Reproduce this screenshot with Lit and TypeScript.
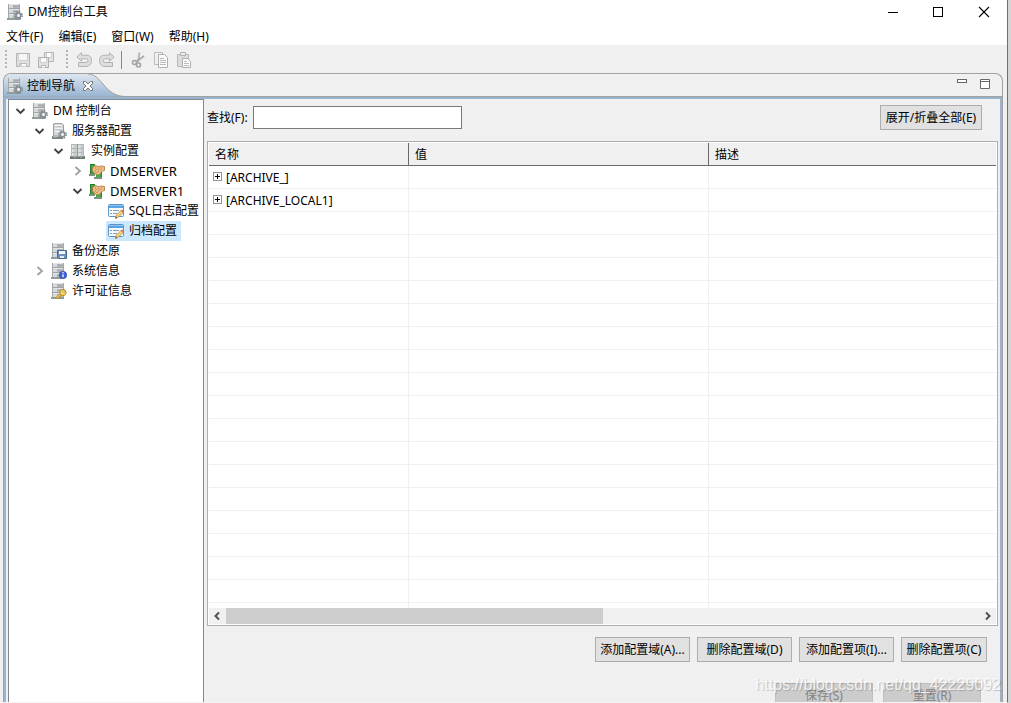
import { LitElement, html, css, svg, nothing } from "lit";
import { customElement, property } from "lit/decorators.js";

const gear = svg`
  <circle cx="11.5" cy="11.5" r="3.6" fill="none" stroke="#7d848b" stroke-width="1.6" stroke-dasharray="1.5 1.33"/>
  <circle cx="11.5" cy="11.5" r="2.4" fill="#d4d8dc" stroke="#858c93" stroke-width="1.4"/>
  <circle cx="11.5" cy="11.5" r=".9" fill="#fff"/>`;

const rack = svg`
  <path d="M1 0h12v14H1z" fill="#b4b8bb"/>
  <path d="M2 0h4v14H2z" fill="#d6d9db"/>
  <path d="M1.5 0v14M12.5 0v14" stroke="#a4a8ab"/>
  <path d="M2 .5h10M2 5.5h10M2 10.5h10" stroke="#e2e5e6"/>
  <path d="M1 4.5h12M1 9.5h12" stroke="#a0a4a7"/>
  <path d="M6.500 2.500h5M6.500 7.500h5M6.500 12.500h5" stroke="#a5a9ac"/>
  <rect x="0" y="14" width="13" height="2" fill="#949a9d"/>
  <path d="M3 14.5h2" stroke="#7cae7e"/>`;

const icons: Record<string, unknown> = {
  console: svg`${rack}${gear}`,
  server: svg`
    <path d="M3 .5h8l1.500 1.500v11h-10V1z" fill="#d6d8da" stroke="#9b9fa2"/>
    <path d="M4 2.500h7M4 5.500h7M4 8.500h4" stroke="#f6f7f7"/>
    <path d="M4 3.500h7M4 6.500h7" stroke="#c0c4c6"/>
    <rect x="1" y="13" width="11" height="3" fill="#7f8487"/>
    <path d="M2 13.500h8" stroke="#b6babc"/>
    <path d="M3 14.5h2" stroke="#7cae7e"/>${gear}`,
  instance: svg`
    <path d="M1 1h13v12H1z" fill="#c9cccd"/>
    <path d="M2.500 1v12M9.500 1v12" stroke="#e0e2e3" stroke-width="2"/>
    <path d="M1.500 5.500h5M8.500 5.500h5M1.500 9.500h5M8.500 9.500h5" stroke="#b0b4b6"/>
    <path d="M1.500 1v12M13.500 1v12M1 1.500h13" stroke="#b4b8ba"/>
    <path d="M7.500 1v12" stroke="#94999b"/>
    <rect x="0" y="13" width="15" height="3" fill="#70757a"/>
    <path d="M1 13.500h13" stroke="#989da0"/>
    <path d="M4 14.500h2M10 14.500h2" stroke="#6cbf6e"/>`,
  database: svg`
    <path d="M1 1h5v10H1z" fill="#3aa53f"/>
    <path d="M7 7h6v8H7z" fill="#3fae45"/>
    <path d="M1.500 1v10M12.500 8v7M1 1.500h5" stroke="#2a7f30"/>
    <path d="M0 11h6v2H0zM5 14h8v2H5z" fill="#7f9183"/>
    <path d="M3.500 4.500L6 2.500l3.500 1 3-.5 3 .5v4l-2 .5-3 3.500-2.500.5-3-2-1.500-2z" fill="#eabd8b" stroke="#b07337" stroke-width=".8"/>
    <path d="M6 5h1M9 5h1M12 5h1M7.500 6.500h1M10.500 6.500h1M6 8h1M9 8h1M7.500 9.500h1" stroke="#b8783e"/>`,
  config: svg`
    <rect x=".5" y="1.500" width="15" height="12" rx="1" fill="#f5fafe" stroke="#5b93c8"/>
    <rect x="1" y="2" width="14" height="3" fill="#58a4e6"/>
    <path d="M1 2.500h14" stroke="#8cc3f2"/>
    <path d="M2 7.500h2M5 7.500h6M2 10.500h2M5 10.500h4" stroke="#8b9aa8"/>
    <path d="M7.500 15.500l1-3.500 5-5 2 2-5 5z" fill="#f7d774" stroke="#a37a35" stroke-width=".7"/>
    <path d="M12.800 7.700L14 6.500l1.800 1.800-1.200 1.200z" fill="#dd6a60"/>
    <path d="M7.500 15.500l.4-1.500 1.100 1.100z" fill="#40352a"/>`,
  backup: svg`${rack}
    <path d="M6.500 7.500h9v8h-8l-1-1z" fill="#6c93bd" stroke="#426a96"/>
    <rect x="8" y="8" width="6" height="3" fill="#f4f7fa"/>
    <rect x="9" y="13" width="4" height="2" fill="#e4ebf1"/>`,
  info: svg`${rack}
    <circle cx="12" cy="12" r="3.800" fill="#3c60cf" stroke="#2746a3" stroke-width=".5"/>
    <path d="M12 9v1.300M12 11.200v3" stroke="#fff" stroke-width="1.300"/>`,
  license: svg`${rack}
    <path d="M9.500 10l-4.500 4.500v1.200h2.500v-1.200H9v-1.300l2-1.500z" fill="#f2c940" stroke="#a67f22" stroke-width=".8"/>
    <circle cx="12" cy="9.500" r="3.100" fill="#f9dc6a" stroke="#b58b22"/>
    <circle cx="12.800" cy="8.700" r="1" fill="#fffbe8" stroke="#8f6a14" stroke-width=".5"/>`,
  save: svg`
    <path d="M1.500 1.500h13v13h-13z" fill="#e0e0e0" stroke="#b4b4b4"/>
    <path d="M3.500 2v6.500h9V2" fill="#f6f6f6" stroke="#cecece"/>
    <path d="M4.500 14.500v-3h7v3" fill="#fafafa" stroke="#bababa"/>
    <path d="M6 12v2" stroke="#aaa"/>`,
  saveall: svg`
    <path d="M6.500 .5h9v9h-9z" fill="#e4e4e4" stroke="#b4b4b4"/>
    <path d="M8.500 1v4.500h5V1" fill="#fafafa" stroke="#cecece"/>
    <path d="M.5 5.500h10v10H.5z" fill="#e0e0e0" stroke="#b0b0b0"/>
    <path d="M2.500 6v4.500h6V6" fill="#fafafa" stroke="#cecece"/>
    <path d="M3.500 15.500v-2h4v2" fill="#fff" stroke="#b4b4b4"/>`,
  undo: svg`<path d="M5.500 .8L.8 5l4.700 4.200V6.800H10q2 0 2 1.800T10 10.500H2.500v4H10q5.500-.5 5.500-6T10 3.200H5.500z" fill="#dedede" stroke="#b2b2b2"/>`,
  redo: svg`<path d="M10.500 .8L15.200 5l-4.700 4.200V6.800H6q-2 0-2 1.800t2 1.900h7.500v4H6Q.5 14 .5 8.500T6 3.200h4.500z" fill="#dedede" stroke="#b2b2b2"/>`,
  cut: svg`
    <path d="M9.500 .5L8 10" stroke="#b4b4b4" stroke-width="1.800" fill="none"/>
    <path d="M14 4L6.500 9.500" stroke="#aaa" stroke-width="1.800" fill="none"/>
    <circle cx="4.500" cy="10.500" r="2" fill="none" stroke="#a2a2a2" stroke-width="1.600"/>
    <circle cx="8.500" cy="13" r="2" fill="none" stroke="#a2a2a2" stroke-width="1.600"/>`,
  copy: svg`
    <path d="M1.500 .5h8v12h-8z" fill="#f0f0f0" stroke="#bcbcbc"/>
    <path d="M5.500 2.500h6l3 3v10h-9z" fill="#fafafa" stroke="#b0b0b0"/>
    <path d="M7 6.500h4M7 8.500h6M7 10.500h6M7 12.500h6" stroke="#bbb"/>`,
  paste: svg`
    <path d="M1.500 2.500h11v12h-11z" fill="#dcdcdc" stroke="#b8b8b8"/>
    <path d="M4.500 .5h5v3h-5z" fill="#eee" stroke="#b0b0b0"/>
    <path d="M6.500 6.500h5l3 3v6h-8z" fill="#fafafa" stroke="#aeaeae"/>
    <path d="M8 9.500h3M8 11.500h5M8 13.500h5" stroke="#bbb"/>`,
  open: svg`<path d="M3.500 6L7.500 10l4-4" fill="none" stroke="#404040" stroke-width="1.800"/>`,
  closed: svg`<path d="M5.500 4L10 8l-4.500 4" fill="none" stroke="#a0a0a0" stroke-width="1.800"/>`,
  left: svg`<path d="M10 4.500L6.500 8l3.500 3.500" fill="none" stroke="#505050" stroke-width="2"/>`,
  right: svg`<path d="M7 4.500L10.500 8 7 11.500" fill="none" stroke="#505050" stroke-width="2"/>`,
  minimize: svg`<path d="M4 8.500h10" stroke="#000"/>`,
  maximize: svg`<rect x="3.500" y="3.500" width="9" height="9" fill="none" stroke="#000"/>`,
  close: svg`<path d="M3 3l10 10M13 3L3 13" stroke="#000" stroke-width="1.100"/>`,
  viewmin: svg`<rect x="3.500" y="3.500" width="9" height="3" fill="#fff" stroke="#666"/>`,
  viewmax: svg`<path d="M3.500 3.500h9v9h-9zM3 5.500h10" fill="#fff" stroke="#666"/>`,
  tabclose: svg`<path d="M3.500 3.500h2L8 6l2.500-2.500h2v2L10 8l2.500 2.500v2h-2L8 10l-2.500 2.500h-2v-2L6 8 3.500 5.500z" fill="#fff" stroke="#666" stroke-width=".9"/>`,
  plus: svg`<rect x="4.500" y="2.500" width="8" height="8" fill="#fff" stroke="#919191"/><path d="M6 6.500h5M8.500 4v5" stroke="#000"/>`,
};

@customElement("ui-icon")
class UiIcon extends LitElement {
  static styles = css`
    :host { display: block; flex: none; width: 16px; height: 16px; }
    svg { display: block; }
  `;
  @property() name = "";
  render() {
    return html`<svg width="16" height="16" viewBox="0 0 16 16" aria-hidden="true">${icons[this.name]}</svg>`;
  }
}

interface TreeItem { label: string; icon: string; level: number; state?: "open" | "closed"; selected?: boolean; latin?: boolean; }

const items: TreeItem[] = [
  { label: "DM 控制台", icon: "console", level: 0, state: "open" },
  { label: "服务器配置", icon: "server", level: 1, state: "open" },
  { label: "实例配置", icon: "instance", level: 2, state: "open" },
  { label: "DMSERVER", icon: "database", level: 3, state: "closed", latin: true },
  { label: "DMSERVER1", icon: "database", level: 3, state: "open", latin: true },
  { label: "SQL日志配置", icon: "config", level: 4 },
  { label: "归档配置", icon: "config", level: 4, selected: true },
  { label: "备份还原", icon: "backup", level: 1 },
  { label: "系统信息", icon: "info", level: 1, state: "closed" },
  { label: "许可证信息", icon: "license", level: 1 },
];

@customElement("nav-tree")
class NavTree extends LitElement {
  static styles = css`
    :host { display: block; background: #fff; border: 1px solid #828790; border-bottom: 0; padding-top: 1px; }
    ul { list-style: none; margin: 0; padding: 0; }
    li { display: flex; align-items: center; height: 20px; padding-left: 4px; }
    .l1 { padding-left: 23px; }
    .l2 { padding-left: 42px; }
    .l3 { padding-left: 61px; }
    .l4 { padding-left: 80px; }
    .twist { width: 16px; }
    .node { display: flex; align-items: center; gap: 5px; height: 20px; padding: 0 4px 0 2px; margin-left: 1px; white-space: nowrap; color: #000; text-decoration: none; }
    .selected { background: #cce8ff; }
    .latin { font-size: 13px; line-height: 14px; }
  `;
  render() {
    return html`<ul>${items.map((n) => html`
      <li class="l${n.level}">
        <span class="twist">${n.state ? html`<ui-icon name=${n.state}></ui-icon>` : nothing}</span>
        <a href="#" class="node ${n.selected ? "selected" : ""} ${n.latin ? "latin" : ""}"><ui-icon name=${n.icon}></ui-icon>${n.label}</a>
      </li>`)}</ul>`;
  }
}

const rows = ["[ARCHIVE_]", "[ARCHIVE_LOCAL1]", ...Array(17).fill("")];

@customElement("config-table")
class ConfigTable extends LitElement {
  static styles = css`
    :host { display: block; background: #fff; border: 1px solid #abadb3; padding: 1px; }
    table { width: 100%; border-collapse: separate; border-spacing: 0; table-layout: fixed; }
    .mid { width: 300px; }
    .first { width: 200px; }
    th { box-sizing: border-box; height: 23px; padding: 2px 6px 0; text-align: left; font-weight: 400; background: #f0f0f0; border-bottom: 1px solid #696969; border-right: 1px solid #696969; }
    td { box-sizing: border-box; height: 23px; padding: 0; border-bottom: 1px solid #f0f0f0; border-right: 1px solid #f0f0f0; }
    th:last-child, td:last-child { border-right: 0; }
    .name { display: flex; align-items: center; gap: 1px; padding-top: 2px; }
    .tail { height: 5px; border-bottom: 0; }
    .scroll { display: flex; height: 16px; background: #f0f0f0; }
    .track { flex: 1; display: flex; }
    .thumb { width: 50%; background: #cdcdcd; }
    button { width: 17px; border: 0; padding: 0; background: none; }
  `;
  render() {
    return html`
      <table>
        <thead><tr><th class="first">名称</th><th class="mid">值</th><th>描述</th></tr></thead>
        <tbody>
          ${rows.map((r) => html`<tr><td>${r ? html`<span class="name"><ui-icon name="plus"></ui-icon>${r}</span>` : nothing}</td><td></td><td></td></tr>`)}
          <tr><td class="tail"></td><td class="tail"></td><td class="tail"></td></tr>
        </tbody>
      </table>
      <div class="scroll">
        <button aria-label="向左"><ui-icon name="left"></ui-icon></button>
        <div class="track"><div class="thumb"></div></div>
        <button aria-label="向右"><ui-icon name="right"></ui-icon></button>
      </div>`;
  }
}

@customElement("app-root")
class AppRoot extends LitElement {
  static styles = css`
    :host { display: block; height: 100vh; overflow: hidden; font: 12px/16px "Noto Sans", "Noto Sans CJK SC", sans-serif; color: #000; background: #d5d5d5; }
    button, input { font: inherit; color: inherit; }
    .window { box-sizing: border-box; position: relative; height: 100%; display: flex; flex-direction: column; margin-right: 3px; background: #f0f0f0; border-right: 1px solid #707070; border-bottom: 1px solid #f4f4f4; overflow: hidden; }
    .title { display: flex; align-items: center; height: 23px; padding-left: 7px; background: #fff; }
    .title ui-icon { margin-right: 5px; }
    .caption { flex: 1; }
    .sys { width: 46px; height: 23px; padding: 0; border: 0; background: none; display: flex; align-items: center; justify-content: center; }
    .sys ui-icon { margin: 0; }
    .menu { box-sizing: border-box; display: flex; gap: 15px; height: 22px; padding: 6px 6px 0; align-items: center; background: #fff; }
    .plain { border: 0; padding: 0; background: none; }
    .tools { box-sizing: border-box; display: flex; align-items: center; height: 28px; padding: 2px 0 0 5px; flex: none; }
    .group { display: flex; align-items: center; gap: 7px; margin-right: 12px; }
    .edit { margin-right: 6px; }
    .sep + .group { padding-left: 8px; }
    .grip { width: 2px; height: 20px; background: repeating-linear-gradient(#b4b4b4 0 2px, transparent 2px 4px); margin-right: 1px; }
    .sep { width: 1px; height: 18px; background: #8a8a8a; }
    .folder { flex: 1; min-height: 0; display: flex; flex-direction: column; margin: 0 4px 0 3px; border: 1px solid #a0a0a0; border-bottom: 0; border-radius: 8px 8px 0 0; overflow: hidden; }
    .tabs { display: flex; justify-content: space-between; height: 22px; border-bottom: 1px solid #a0a0a0; flex: none; }
    .tab { box-sizing: border-box; position: relative; display: flex; align-items: center; width: 122px; padding-top: 1px; }
    .curve { position: absolute; inset: 0; }
    .tab ui-icon, .tab .label { position: relative; }
    .tab .label { margin: 0 5px 0 4px; }
    .tab ui-icon { margin-left: 3px; }
    .tab button ui-icon { margin-left: 0; }
    .views { display: flex; gap: 7px; padding-right: 9px; }
    .views button { height: 20px; display: flex; align-items: center; }
    .body { flex: 1; min-height: 0; display: flex; border: solid #99b4d1; border-width: 2px 2px 0; }
    nav-tree { width: 194px; flex: none; margin-left: 2px; }
    .editor { flex: 1; min-width: 0; padding: 4px 2px 0 3px; }
    .search { display: flex; align-items: center; justify-content: space-between; height: 29px; margin-bottom: 9px; padding-right: 16px; }
    .search label { display: flex; align-items: center; gap: 5px; }
    .search input { box-sizing: border-box; width: 209px; height: 23px; border: 1px solid #7a7a7a; padding: 0 4px; background: #fff; }
    .btn { box-sizing: border-box; height: 25px; min-width: 86px; padding: 0 4px; border: 1px solid #adadad; background: #e1e1e1; white-space: nowrap; }
    .toggle { width: 102px; }
    .actions { display: flex; justify-content: flex-end; gap: 7px; margin-top: 11px; padding-right: 11px; }
    .wide { width: 95px; }
    .footer { display: flex; justify-content: flex-end; gap: 10px; margin-top: 21px; padding-right: 17px; }
    .footer .btn { width: 98px; color: #838383; background: #ccc; border-color: #bfbfbf; }
    .mark { position: absolute; right: 6px; bottom: 7px; font: 16px/20px "Liberation Sans", sans-serif; color: #fffc; text-shadow: 1px 1px 1px #0003; }
  `;
  render() {
    const tool = (icon: string, label: string) => html`<button class="plain" disabled aria-label=${label}><ui-icon name=${icon}></ui-icon></button>`;
    return html`
      <div class="window">
        <header class="title">
          <ui-icon name="console"></ui-icon><span class="caption">DM控制台工具</span>
          <button class="sys" aria-label="最小化"><ui-icon name="minimize"></ui-icon></button>
          <button class="sys" aria-label="最大化"><ui-icon name="maximize"></ui-icon></button>
          <button class="sys" aria-label="关闭"><ui-icon name="close"></ui-icon></button>
        </header>
        <nav class="menu">${["文件(F)", "编辑(E)", "窗口(W)", "帮助(H)"].map((m) => html`<button class="plain">${m}</button>`)}</nav>
        <div class="tools">
          <div class="group"><span class="grip"></span>${tool("save", "保存")}${tool("saveall", "全部保存")}</div>
          <div class="group edit"><span class="grip"></span>${tool("undo", "撤销")}${tool("redo", "重做")}</div>
          <span class="sep"></span>
          <div class="group">${tool("cut", "剪切")}${tool("copy", "复制")}${tool("paste", "粘贴")}</div>
        </div>
        <main class="folder">
          <div class="tabs">
            <div class="tab">
              <svg class="curve" width="122" height="23" aria-hidden="true">
                <defs><linearGradient id="g" x1="0" y1="0" x2="0" y2="1"><stop offset="0" stop-color="#dde6f0"/><stop offset="1" stop-color="#99b4d1"/></linearGradient></defs>
                <path d="M0 0H84C98 0 100 22 121 22.500H0z" fill="url(#g)"/>
                <path d="M84 0C98 0 100 22 121 22.500" fill="none" stroke="#a0a0a0"/>
              </svg>
              <ui-icon name="console"></ui-icon><span class="label">控制导航</span>
              <button class="plain" aria-label="关闭标签"><ui-icon name="tabclose"></ui-icon></button>
            </div>
            <div class="views">
              <button class="plain" aria-label="最小化视图"><ui-icon name="viewmin"></ui-icon></button>
              <button class="plain" aria-label="最大化视图"><ui-icon name="viewmax"></ui-icon></button>
            </div>
          </div>
          <div class="body">
            <nav-tree></nav-tree>
            <section class="editor">
              <div class="search">
                <label>查找(F):<input type="text"></label>
                <button class="btn toggle">展开/折叠全部(E)</button>
              </div>
              <config-table></config-table>
              <div class="actions">
                <button class="btn wide">添加配置域(A)...</button>
                <button class="btn wide">删除配置域(D)</button>
                <button class="btn wide">添加配置项(I)...</button>
                <button class="btn">删除配置项(C)</button>
              </div>
              <div class="footer">
                <button class="btn" disabled>保存(S)</button>
                <button class="btn" disabled>重置(R)</button>
              </div>
            </section>
          </div>
        </main>
        <div class="mark">https://blog.csdn.net/qq_42229092</div>
      </div>`;
  }
}
